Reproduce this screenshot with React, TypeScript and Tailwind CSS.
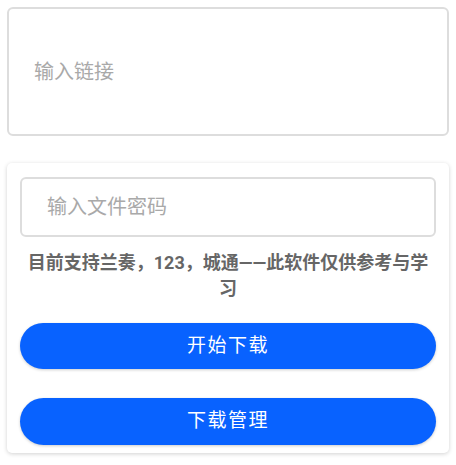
export default function App() {
  return (
    <div className="min-h-[465px] bg-white px-[7px] pt-[7px] font-['Roboto','Noto_Sans_CJK_SC',sans-serif]">
      <div className="flex h-[129px] items-center rounded-[6px] border-2 border-[#dddddd] px-[25px]">
        <span className="text-[20px] text-[#a9a9a9]">输入链接</span>
      </div>

      <div className="mt-[27px] rounded-[5px] bg-white px-[13px] pb-[8px] pt-[14px] shadow-[0_1px_4px_rgba(0,0,0,0.18)]">
        <div className="flex h-[60px] items-center rounded-[6px] border-2 border-[#dddddd] px-[25px]">
          <span className="text-[20px] text-[#a9a9a9]">输入文件密码</span>
        </div>

        <p className="mt-[13px] text-center text-[18px] font-bold leading-[26px] text-[#666666]">
          目前支持兰奏，123，城通——此软件仅供参考与学习
        </p>

        <button className="mt-[21px] h-[46px] w-full rounded-full bg-[#0862ff] text-[19px] tracking-[1.5px] text-white shadow-[0_1px_3px_rgba(0,0,0,0.2)]">
          开始下载
        </button>
        <button className="mt-[29px] h-[47px] w-full rounded-full bg-[#0862ff] text-[19px] tracking-[1.5px] text-white shadow-[0_1px_3px_rgba(0,0,0,0.2)]">
          下载管理
        </button>
      </div>
    </div>
  )
}
